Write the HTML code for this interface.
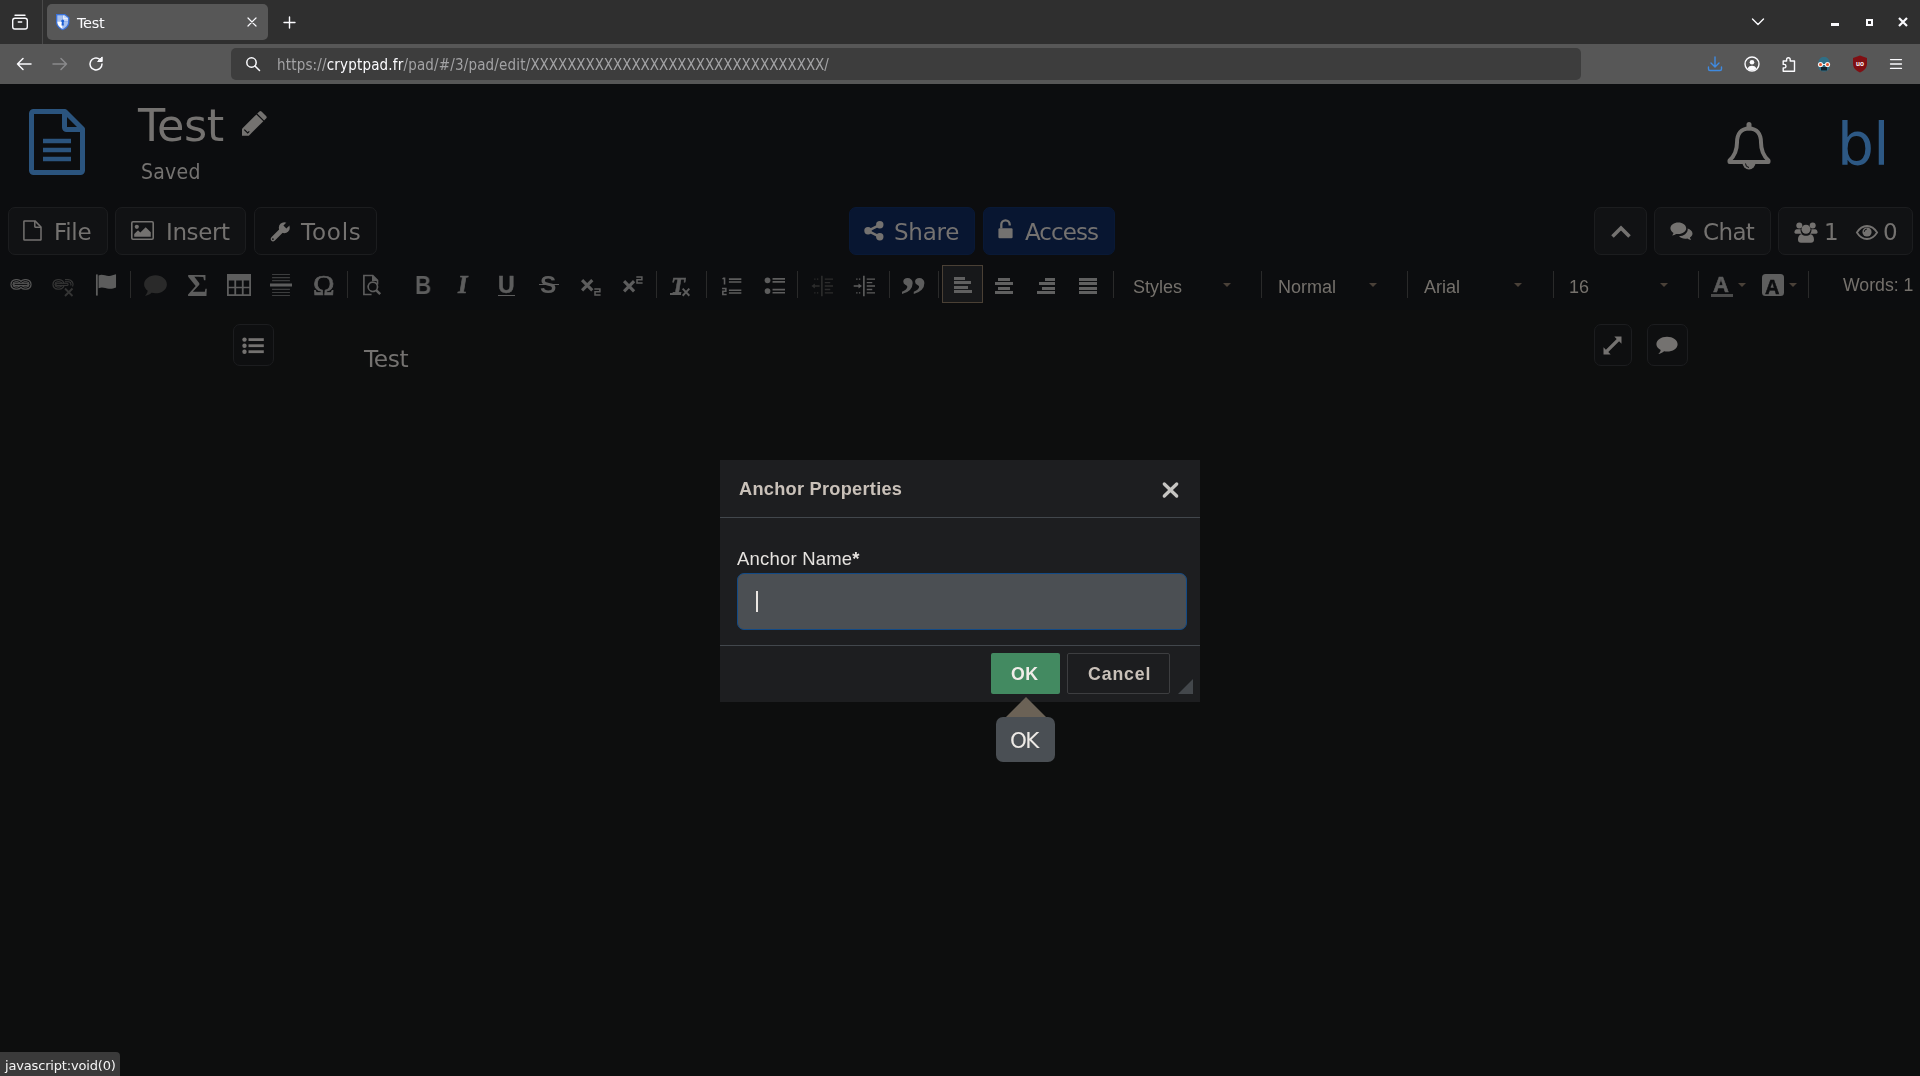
<!DOCTYPE html>
<html lang="en">
<head>
<meta charset="utf-8">
<title>Test</title>
<style>
*{box-sizing:border-box;margin:0;padding:0}
html,body{width:1920px;height:1076px;overflow:hidden;background:#0c0d0f}
body{position:relative;font-family:"DejaVu Sans","Liberation Sans",sans-serif;color:#747270}
.abs{position:absolute}
svg{position:absolute;overflow:visible}
/* browser chrome */
#tabbar{left:0;top:0;width:1920px;height:44px;background:#2f2f2f}
#navbar{left:0;top:44px;width:1920px;height:40px;background:#575757}
#tab{left:47px;top:4px;width:221px;height:36px;border-radius:5px;background:#575757}
#tabsep{left:42px;top:0;width:1px;height:44px;background:#4a4a4a}
#urlbar{left:231px;top:48px;width:1350px;height:32px;border-radius:5px;background:#3d3d3d}
.ff{font-family:"DejaVu Sans Condensed","DejaVu Sans",sans-serif}
.t{position:absolute;white-space:nowrap;line-height:1;will-change:transform}
/* page */
#page{left:0;top:84px;width:1920px;height:992px;background:#0c0d0f}
#edit{left:0;top:310px;width:1920px;height:766px;background:#0d0e0e}
.btn{position:absolute;top:207px;height:48px;border:1px solid #1c1d1f;border-radius:7px;background:#111214}
.btn.b{background:#081631;border-color:#091936}
.sep{position:absolute;top:271px;width:1px;height:27px;background:#2a2a2a}
.ar{font-family:"Liberation Sans",sans-serif}
.combo{will-change:transform;position:absolute;white-space:nowrap;line-height:1;font-family:"Liberation Sans",sans-serif;font-size:18px;color:#75716c;top:277.700px}
.dd{position:absolute;width:0;height:0;border-left:4px solid transparent;border-right:4px solid transparent;border-top:4.5px solid #4a4138;top:283px}
.sbtn{position:absolute;border:1px solid #1c1d1f;border-radius:7px;background:#0e0f10}
/* dialog */
#dlg{left:720px;top:460px;width:480px;height:241.500px;background:#1d1e20}
</style>
</head>
<body>
<!-- ============ BROWSER CHROME ============ -->
<div class="abs" id="tabbar"></div>
<div class="abs" id="navbar"></div>
<div class="abs" id="tabsep"></div>
<div class="abs" id="tab"></div>
<div class="abs" id="urlbar"></div>
<!-- firefox view icon -->
<svg style="left:11px;top:13px" width="18" height="18" viewBox="0 0 18 18" fill="none" stroke="#fbfbfe" stroke-width="1.4"><rect x="1.7" y="5.2" width="14.6" height="10.8" rx="2.2"/><path d="M4 2.3h10" stroke-linecap="round"/><path d="M7.3 9h3.4" stroke-linecap="round"/></svg>
<!-- favicon -->
<svg style="left:56.300px;top:14px" width="13.400" height="16.200" viewBox="0 0 13.400 16.200"><path d="M0 0H9.100L13.400 3.400V8C13.400 12.200 10 15 6.700 16.200 3.400 15 0 12.200 0 8z" fill="#3a72da"/><path d="M1.300 1.300H6.700V7.600H1.300z" fill="#a6c0ef"/><path d="M6.700 1.300H8.600L12.100 4.100V7.600H6.700z" fill="#c4d5f5"/><path d="M1.300 7.600H6.700V14.900C3.900 13.800 1.300 11.300 1.300 8z" fill="#ffffff"/><path d="M6.700 7.600H12.100V8C12.100 11.300 9.500 13.800 6.700 14.900z" fill="#a6c0ef"/><path d="M7.600 1.800V4.600H11.600" fill="none" stroke="#e9effb" stroke-width="1"/><circle cx="6.700" cy="6.900" r="1.500" fill="#1d5fd3"/><path d="M5.900 7.500h1.600l.4 4H5.500z" fill="#1d5fd3"/></svg>
<div class="t" style="left:77px;top:16.400px;font-size:14.500px;letter-spacing:-.3px;color:#fbfbfe">Test</div>
<svg style="left:247px;top:17px" width="10" height="10" viewBox="0 0 10 10" stroke="#fbfbfe" stroke-width="1.200" stroke-linecap="round"><path d="M1 1l8 8M9 1l-8 8"/></svg>
<svg style="left:283px;top:16px" width="13" height="13" viewBox="0 0 13 13" stroke="#fbfbfe" stroke-width="1.400" stroke-linecap="round"><path d="M6.500 1v11M1 6.500h11"/></svg>
<!-- right of tab bar -->
<svg style="left:1751px;top:17px" width="14" height="10" viewBox="0 0 14 10" fill="none" stroke="#fbfbfe" stroke-width="1.400" stroke-linecap="round" stroke-linejoin="round"><path d="M1.500 2l5.500 5.500L12.500 2"/></svg>
<div class="abs" style="left:1831px;top:23px;width:8px;height:3px;background:#fbfbfe"></div>
<div class="abs" style="left:1865.500px;top:18.500px;width:7px;height:7px;border:2.300px solid #fbfbfe"></div>
<svg style="left:1898px;top:17px" width="10" height="10" viewBox="0 0 10 10" stroke="#fbfbfe" stroke-width="2.200"><path d="M1 1l8 8M9 1l-8 8"/></svg>
<!-- nav buttons -->
<svg style="left:16px;top:57px" width="16" height="14" viewBox="0 0 16 14" fill="none" stroke="#fbfbfe" stroke-width="1.500" stroke-linecap="round" stroke-linejoin="round"><path d="M15 7H1.500M7 1.500 1.500 7 7 12.500"/></svg>
<svg style="left:52px;top:57px" width="16" height="14" viewBox="0 0 16 14" fill="none" stroke="#8a8a8c" stroke-width="1.500" stroke-linecap="round" stroke-linejoin="round"><path d="M1 7h13.500M9 1.500 14.500 7 9 12.500"/></svg>
<svg style="left:88px;top:56px" width="16" height="16" viewBox="0 0 16 16" fill="none" stroke="#fbfbfe" stroke-width="1.500" stroke-linecap="round"><path d="M14 8a6 6 0 1 1-2.200-4.650"/><path d="M14.200 1.300v4.200h-4.200z" fill="#fbfbfe" stroke-linejoin="round" stroke-width="1"/></svg>
<!-- url bar -->
<svg style="left:245px;top:56px" width="16" height="16" viewBox="0 0 16 16" fill="none" stroke="#fbfbfe" stroke-width="1.500" stroke-linecap="round"><circle cx="6.500" cy="6.500" r="4.700"/><path d="M10 10l4.500 4.500"/></svg>
<div class="t ff" id="url" style="left:276.500px;top:58px;font-size:15px;letter-spacing:.17px;color:#a3a3a5"><span id="ua">https://</span><span id="ub" style="color:#fbfbfe">cryptpad.fr</span><span id="uc">/pad/#/3/pad/edit/</span><span id="ud" style="letter-spacing:-.06px">XXXXXXXXXXXXXXXXXXXXXXXXXXXXXXXX/</span></div>
<!-- right nav icons -->
<svg style="left:1707px;top:56px" width="16" height="16" viewBox="0 0 16 16" fill="none" stroke="#3f8ae0" stroke-width="1.400" stroke-linecap="round" stroke-linejoin="round"><path d="M8 1v9.500M4 7l4 4 4-4M1.500 11v2a1.500 1.500 0 0 0 1.500 1.500h10a1.500 1.500 0 0 0 1.500-1.500v-2"/></svg>
<svg style="left:1744px;top:56px" width="16" height="16" viewBox="0 0 16 16" fill="none" stroke="#fbfbfe" stroke-width="1.400"><circle cx="8" cy="8" r="7"/><circle cx="8" cy="6.300" r="2.300" fill="#fbfbfe" stroke="none"/><path d="M3.500 12.400c1-2 2.600-2.700 4.500-2.700s3.500.700 4.500 2.700c-1.200 1.200-2.700 1.900-4.500 1.900s-3.300-.700-4.500-1.900z" fill="#fbfbfe" stroke="none"/></svg>
<svg style="left:1781px;top:56px" width="16" height="16" viewBox="0 0 16 16" fill="none" stroke="#fbfbfe" stroke-width="1.400" stroke-linejoin="round"><path d="M2.200 5h3.400v-1.400a1.800 1.800 0 0 1 3.600 0v1.400h4.300v10.300h-11.300v-3.400h1a1.750 1.750 0 0 0 0-3.500h-1z"/></svg>
<!-- badger-ish extension -->
<svg style="left:1815px;top:56px" width="18" height="16" viewBox="0 0 18 16"><path d="M3.500 6.500C3.500 3 6 1 9 1s5.500 2 5.500 5.500V11c0 2.500-2.500 4.500-5.500 4.500S3.500 13.500 3.500 11z" fill="#2f6f86"/><path d="M6 11h6v3.500H6z" fill="#14222b"/><circle cx="5.500" cy="8.500" r="2.600" fill="#f2f2f2"/><circle cx="12.500" cy="8.500" r="2.600" fill="#f2f2f2"/><circle cx="5.500" cy="8.500" r="1.500" fill="#e4572e"/><circle cx="12.500" cy="8.500" r="1.500" fill="#e4572e"/><rect x="7.500" y="8" width="3" height="1" fill="#f2f2f2"/></svg>
<!-- ublock -->
<svg style="left:1852px;top:55px" width="16" height="18" viewBox="0 0 16 18"><path d="M8 .500 15 3v5.500c0 4.500-3 7.300-7 9-4-1.700-7-4.500-7-9V3z" fill="#800f13"/><text x="8" y="11" font-family="Liberation Sans,sans-serif" font-weight="bold" font-size="6.500" fill="#fff" text-anchor="middle">uo</text></svg>
<svg style="left:1888px;top:57px" width="16" height="14" viewBox="0 0 16 14" stroke="#fbfbfe" stroke-width="1.300" stroke-linecap="round"><path d="M2.500 2.600h11M2.500 7h11M2.500 11.400h11"/></svg>

<!-- ============ PAGE ============ -->
<div class="abs" id="page"></div>
<div class="abs" id="edit"></div>
<!-- big file icon 29..85 x 109..175 -->
<svg style="left:29px;top:109px" width="56" height="66" viewBox="0 0 56 66" fill="none" stroke="#2b547e" stroke-width="5" stroke-linejoin="round"><path d="M2.500 4.500a2 2 0 0 1 2-2H36L53.500 20v41.500a2 2 0 0 1-2 2h-47a2 2 0 0 1-2-2z"/><path d="M35.500 2.500v16a2 2 0 0 0 2 2h16"/><path d="M14 32h28M14 41h28M14 50h28" stroke-width="4.500" stroke-linejoin="miter"/></svg>
<div class="t" style="left:138px;top:103.500px;font-size:44.500px;letter-spacing:-.5px">Test</div>
<!-- pencil 242..268 x 110..136 -->
<svg style="left:242px;top:109.700px" width="26" height="26" viewBox="0 0 26 26" fill="#747270"><path d="M0 25.800V18.800L14.400 4.400 21.300 11.300 6.800 25.800z"/><path d="M15.200 3.600 17.400 1.400Q18.450.350 19.500 1.400L24.300 6.200Q25.350 7.250 24.300 8.300L22.100 10.500z"/><path d="M2.300 19.600 5.700 23 7.300 21.400" fill="none" stroke="#0c0d0f" stroke-width="1.200"/></svg>
<div class="t ff" style="left:140.500px;top:161.500px;font-size:21px;letter-spacing:.25px">Saved</div>
<!-- bell -->
<svg style="left:1727px;top:122px" width="44" height="48" viewBox="0 0 44 48" fill="none" stroke="#747270" stroke-width="4" stroke-linejoin="round"><path d="M22 6.500c-8 0-12 5.500-12 14 0 8-2.500 13.500-7.500 18v1.500h39v-1.500c-5-4.500-7.500-10-7.500-18 0-8.500-4-14-12-14z"/><path d="M22 6V2.500" stroke-linecap="round" stroke-width="5"/><path d="M15.500 41a6.500 6.500 0 0 0 13 0z" fill="#747270" stroke="none"/><path d="M18.500 41.500a4 4 0 0 0 3.500 4" stroke="#0c0d0f" stroke-width="1"/></svg>
<div class="t" style="left:1837px;top:116px;font-size:58.300px;letter-spacing:-.8px;color:#2d5884">bl</div>
<!-- buttons -->
<div class="btn" style="left:8px;width:100px"></div>
<div class="btn" style="left:115px;width:131px"></div>
<div class="btn" style="left:254px;width:123px;background:#0e0f11"></div>
<div class="btn b" style="left:849px;width:126px"></div>
<div class="btn b" style="left:983px;width:132px"></div>
<div class="btn" style="left:1594px;width:53px"></div>
<div class="btn" style="left:1654px;width:117px"></div>
<div class="btn" style="left:1778px;width:135px"></div>
<!-- file-o -->
<svg style="left:23px;top:220px" width="19" height="21" viewBox="0 0 19 21" fill="none" stroke="#747270" stroke-width="1.500" stroke-linejoin="round"><path d="M.900 1.500a.6.600 0 0 1 .6-.6H12L18 7v12.500a.6.600 0 0 1-.6.600H1.500a.6.600 0 0 1-.6-.6z"/><path d="M11.800 1v5.600a.6.600 0 0 0 .6.600H18"/></svg>
<div class="t" style="left:53.500px;top:220.500px;font-size:23px;letter-spacing:-.3px">File</div>
<!-- picture-o -->
<svg style="left:131px;top:221px" width="23" height="19" viewBox="0 0 23 19"><rect x=".8" y=".8" width="21.400" height="17.400" rx="1.200" fill="none" stroke="#747270" stroke-width="1.600"/><circle cx="5.800" cy="5.800" r="2.100" fill="#747270"/><path d="M3.200 15.700v-2.600l3.800-3.800 2.300 2.300 5.400-5.400 5.100 5.100v4.400z" fill="#747270"/></svg>
<div class="t" style="left:165.900px;top:220.500px;font-size:23px;letter-spacing:-.4px">Insert</div>
<!-- wrench -->
<svg style="left:269.800px;top:221.500px" width="20" height="20" viewBox="0 0 20 20"><path d="M3 17 12 8" stroke="#747270" stroke-width="4.600" stroke-linecap="round"/><circle cx="14.300" cy="5.700" r="5.500" fill="#747270"/><path d="M14.900 5.100 21 -1" stroke="#0e0f11" stroke-width="4.200"/><circle cx="2.900" cy="17.100" r=".9" fill="#0e0f11"/></svg>
<div class="t" style="left:301px;top:220.500px;font-size:23px;letter-spacing:0.8px">Tools</div>
<!-- share-alt -->
<svg style="left:864px;top:221px" width="20" height="20" viewBox="0 0 20 20" fill="#747270" stroke="#747270"><circle cx="15.800" cy="3.800" r="3.700" stroke="none"/><circle cx="15.800" cy="15.800" r="3.700" stroke="none"/><circle cx="4" cy="9.800" r="3.700" stroke="none"/><path d="M4 9.800 15.800 3.800M4 9.800l11.800 6" stroke-width="2.500" fill="none"/></svg>
<div class="t" style="left:894px;top:220.500px;font-size:23px;letter-spacing:-0.27px">Share</div>
<!-- unlock-alt -->
<svg style="left:998px;top:219px" width="15" height="20" viewBox="0 0 15 20" fill="#747270"><rect x=".4" y="9.200" width="14.200" height="10" rx="1.200"/><path d="M3.300 9.500V5.600a4.200 4.200 0 0 1 8.400 0v1" fill="none" stroke="#747270" stroke-width="2.300"/></svg>
<div class="t" style="left:1025px;top:220.500px;font-size:23px;letter-spacing:-0.96px">Access</div>
<!-- chevron up -->
<svg style="left:1611px;top:225px" width="20" height="13" viewBox="0 0 20 13" fill="none" stroke="#747270" stroke-width="3.600"><path d="M1.500 11.500 10 3l8.500 8.500"/></svg>
<!-- comments -->
<svg style="left:1670px;top:222px" width="23" height="19" viewBox="0 0 23 19" fill="#747270"><path d="M8.300.500c4.400 0 7.900 2.600 7.900 5.800s-3.500 5.800-7.900 5.800c-.7 0-1.400-.100-2.100-.200-1.200.9-2.600 1.400-4.100 1.500 .7-.7 1.200-1.500 1.400-2.500C1.600 9.800.400 8.200.400 6.300.400 3.100 3.900.500 8.300.500z"/><path d="M17.600 6.500c2.700.8 4.900 2.700 4.900 5 0 1.700-1 3.100-2.600 4.100.2.900.7 1.700 1.300 2.300-1.400-.1-2.800-.6-3.900-1.400-.7.100-1.300.2-2 .2-2.600 0-4.900-.9-6.300-2.400 4.900-.100 8.700-3.200 8.700-7 0-.3 0-.5-.1-.8z"/></svg>
<div class="t" style="left:1703.300px;top:220.500px;font-size:23px;letter-spacing:-0.63px">Chat</div>
<!-- users -->
<svg style="left:1794px;top:222px" width="24" height="21" viewBox="0 0 24 21" fill="#747270"><circle cx="5.300" cy="3.600" r="3"/><circle cx="18.700" cy="3.600" r="3"/><circle cx="12" cy="7.300" r="4.500"/><path d="M.400 10.500c0-2 1-3.300 2.500-3.300h3.700c-.3 1.900.300 3.400 1.500 4.600H3c-1.500 0-2.600-.5-2.600-1.300zM23.600 10.500c0-2-1-3.300-2.500-3.300h-3.700c.3 1.900-.3 3.400-1.500 4.600H21c1.500 0 2.600-.5 2.600-1.300z"/><path d="M4 17.800c0-3.300 1.500-5.600 3.800-5.600 1.100 1 2.600 1.600 4.200 1.600s3.100-.6 4.200-1.600c2.300 0 3.800 2.300 3.800 5.600 0 1.800-1.200 2.900-3 2.900H7c-1.800 0-3-1.100-3-2.900z"/></svg>
<div class="t" style="left:1824px;top:220.500px;font-size:23px;letter-spacing:0px">1</div>
<!-- eye -->
<svg style="left:1856px;top:225px" width="22" height="15" viewBox="0 0 22 15" fill="none" stroke="#747270"><path d="M.900 7.500C3.500 3.300 7 1 11 1s7.500 2.300 10.100 6.500C18.500 11.700 15 14 11 14S3.500 11.700.900 7.500z" stroke-width="1.800"/><circle cx="11" cy="7" r="4.600" fill="#747270" stroke="none"/><path d="M8.300 6.800a2.700 2.700 0 0 1 2.600-2.700" stroke="#111214" stroke-width="1"/></svg>
<div class="t" style="left:1883px;top:220.500px;font-size:23px;letter-spacing:0px">0</div>

<!--TB0-->
<svg style="left:9px;top:277px" width="24" height="22" viewBox="0 0 24 22" fill="none"><g stroke="#555555" stroke-width="3.300"><rect x="3" y="3.700" width="9" height="7.400" rx="3.700"/><rect x="12" y="3.700" width="9" height="7.400" rx="3.700"/></g><g stroke="#0c0d0f" stroke-width="1"><rect x="3" y="3.700" width="9" height="7.400" rx="3.700"/><rect x="12" y="3.700" width="9" height="7.400" rx="3.700"/></g><g stroke="#555555" stroke-width="3.200" stroke-linecap="round"><path d="M6 7.400h12"/></g><g stroke="#0c0d0f" stroke-width="1" stroke-linecap="round"><path d="M6 7.400h12"/></g></svg>
<svg style="left:51px;top:276.5px" width="24" height="22" viewBox="0 0 24 22" fill="none"><g stroke="#343434" stroke-width="3.300"><rect x="3" y="3.700" width="9" height="7.400" rx="3.700"/><path d="M14 3.700h3.300a3.700 3.700 0 0 1 3.300 5.400"/></g><g stroke="#0c0d0f" stroke-width="1"><rect x="3" y="3.700" width="9" height="7.400" rx="3.700"/><path d="M14 3.700h3.300a3.700 3.700 0 0 1 3.300 5.400"/></g><g stroke="#343434" stroke-width="3.200" stroke-linecap="round"><path d="M6 7.400h10"/></g><g stroke="#0c0d0f" stroke-width="1" stroke-linecap="round"><path d="M6 7.400h10"/></g><path d="M14 11.500l7.500 7.500M21.500 11.500l-7.500 7.500" stroke-width="1.900" stroke="#343434"/></svg>
<svg style="left:95px;top:274px" width="22" height="22" viewBox="0 0 16 16" fill="#5d5d5d" stroke="none" ><path d="M.700 .300h1.300v15.400H.700z"/><path d="M2.600 1c2.800-1.300 5 .6 7.800.4 1.600-.1 3-.7 4.900-1.200v9.600c-2 .9-3.600 1.100-5.200.9C7.500 10.400 5.200 9 2.600 10.400z"/></svg>
<div class="sep" style="left:130px"></div>
<svg style="left:142.5px;top:273px" width="25" height="25" viewBox="0 0 16 16" fill="#2a2a2a" stroke="none" ><path d="M8 1.500c4 0 7.300 2.600 7.300 5.800S12 13 8 13c-.9 0-1.700-.1-2.500-.3-1.200 1.100-2.700 1.800-4.300 1.900 1-.9 1.600-2.100 1.800-3.300C1.600 10.200.700 8.800.700 7.300.700 4.100 4 1.500 8 1.500z"/></svg>
<div class="t" style="left:186.500px;top:269.500px;font-family:'Liberation Serif',serif;font-weight:bold;font-size:31px;color:#5d5d5d;transform:scaleX(1.05);transform-origin:0 0">Σ</div>
<svg style="left:227px;top:274px" width="24" height="22" viewBox="0 0 16 16" preserveAspectRatio="none" fill="#5d5d5d"><path d="M0 0h16v16H0zM1.200 4.800v4.400h3.700V4.800zm4.900 0v4.400h3.800V4.800zm5 0v4.400h3.700V4.800zM1.200 10.400v4.400h3.700v-4.400zm4.900 0v4.400h3.800v-4.400zm5 0v4.400h3.700v-4.400z" fill-rule="evenodd"/></svg>
<svg style="left:270px;top:274px" width="22" height="22" viewBox="0 0 16 16" fill="#5d5d5d" stroke="none" ><path d="M1.500 0h13v.8h-13zM1.500 2.200h13v.8h-13zM1.500 4.400h13v.8h-13zM1.500 10.800h13v.8h-13zM1.500 13h13v.8h-13zM1.500 15.200h13v.8h-13z" opacity=".6"/><path d="M0 6.900h16v2.200H0z"/></svg>
<div class="t" style="left:312.500px;top:270.500px;font-family:'Liberation Serif',serif;font-weight:normal;-webkit-text-stroke:.7px #5d5d5d;font-size:29px;color:#5d5d5d">Ω</div>
<div class="sep" style="left:347px"></div>
<svg style="left:361px;top:274px" width="22" height="22" viewBox="0 0 16 16" fill="#5d5d5d" stroke="none" ><path d="M1.500.500h7.300L12.600 4.300v3.300h-1.200V5H8V1.700H2.700v12.600h5v1.200H1.500z"/><path d="M8.600 5.300a4 4 0 0 1 3.400 6.100l2.600 2.600-1.300 1.300-2.600-2.600A4 4 0 1 1 8.600 5.300zm0 1.200a2.800 2.800 0 1 0 0 5.600 2.800 2.800 0 0 0 0-5.600z" fill-rule="evenodd"/></svg>
<div class="t" style="left:415px;top:272.5px;font-family:'Liberation Sans',sans-serif;font-weight:bold;font-size:25px;color:#5d5d5d;transform:scaleX(.9);transform-origin:0 0">B</div>
<div class="t" style="left:457.5px;top:272.5px;font-family:'Liberation Serif',sans-serif;font-weight:bold;font-size:24.5px;color:#5d5d5d;font-style:italic;-webkit-text-stroke:.7px #5d5d5d">I</div>
<div class="t" style="left:498px;top:274px;font-family:'Liberation Sans',sans-serif;font-weight:bold;font-size:23px;color:#5d5d5d;-webkit-text-stroke:.5px #5d5d5d">U</div>
<div class="abs" style="left:498px;top:294.500px;width:17px;height:1.500px;background:#5d5d5d"></div>
<div class="t" style="left:540px;top:272.5px;font-family:'Liberation Sans',sans-serif;font-weight:bold;font-size:24.5px;color:#5d5d5d;">S</div>
<div class="abs" style="left:538.500px;top:283.500px;width:20px;height:1.800px;background:#5d5d5d"></div>
<svg style="left:580.6px;top:278.8px" width="12.4" height="12.4" viewBox="0 0 12.4 12.4" fill="none" stroke="#5d5d5d" stroke-width="3.1"><path d="M1.08 1.08L11.32 11.32M11.32 1.08L1.08 11.32"/></svg>
<svg style="left:594px;top:288px" width="7" height="8" viewBox="0 0 7 8" fill="none" stroke="#5d5d5d" stroke-width="1.500"><path d="M.300 .900H5.900V3.800H1V7H6.600"/></svg>
<svg style="left:622.9px;top:280.2px" width="12.2" height="12.4" viewBox="0 0 12.2 12.4" fill="none" stroke="#5d5d5d" stroke-width="3.1"><path d="M1.08 1.08L11.11 11.32M11.11 1.08L1.08 11.32"/></svg>
<svg style="left:636.4px;top:276px" width="7" height="8" viewBox="0 0 7 8" fill="none" stroke="#5d5d5d" stroke-width="1.500"><path d="M.300 .900H5.900V3.800H1V7H6.600"/></svg>
<div class="sep" style="left:656px"></div>
<div class="t" style="left:670.5px;top:273.5px;font-family:'Liberation Serif',sans-serif;font-weight:bold;font-size:23px;color:#5d5d5d;font-style:italic;-webkit-text-stroke:.5px #5d5d5d">T</div>
<div class="abs" style="left:670.300px;top:293px;width:10.600px;height:1.500px;background:#5d5d5d"></div>
<svg style="left:682.3px;top:288.2px" width="8" height="8.4" viewBox="0 0 8 8.4" fill="none" stroke="#5d5d5d" stroke-width="1.9"><path d="M0.66 0.66L7.33 7.74M7.33 0.66L0.66 7.74"/></svg>
<div class="sep" style="left:706px"></div>
<svg style="left:721px;top:275.5px" width="21" height="21" viewBox="0 0 16 16" fill="#5d5d5d" stroke="none" ><path d="M1.800 1.200h1.500v5.300H2.100V2.400H1V1.700zM6 1.800h9.500v1.200H6zM6 4h9.500v1.200H6zM6 10.200h9.500v1.200H6zM6 12.400h9.500v1.200H6z"/><path d="M.800 9h3.500v3.200H2v1.300h2.300v1.100H.800v-3.500h2.300V10.100H.800z"/></svg>
<svg style="left:763.5px;top:275.5px" width="21" height="21" viewBox="0 0 16 16" fill="#5d5d5d" stroke="none" ><circle cx="2.700" cy="3.300" r="2.200"/><circle cx="2.700" cy="11.500" r="2.200"/><path d="M6.500 1.500h9.500v1.300H6.500zM6.500 3.900h9.500v1.300H6.500zM6.500 9.700h9.500V11H6.500zM6.500 12.100h9.500v1.300H6.500z"/></svg>
<div class="sep" style="left:797px"></div>
<svg style="left:811px;top:274.7px" width="22" height="22" viewBox="0 0 16 16" fill="#2c2c2c" stroke="none" ><path d="M7.300.500h1.200v15H7.300z"/><path d="M10 2.500h6v1h-6zM10 5h4v1h-4zM10 7.500h6v1h-6zM10 10h4v1h-4zM10 12.500h6v1h-6z"/><path d="M2.300 2.500h1v1h-1zM4.300 2.500h1v1h-1zM2.300 12.500h1v1h-1zM4.300 12.500h1v1h-1z"/><path d="M6.300 7.500v1H2.800v1.300L.300 8l2.500-1.800v1.300z"/></svg>
<svg style="left:853px;top:274.7px" width="22" height="22" viewBox="0 0 16 16" fill="#5d5d5d" stroke="none" ><path d="M7.300.500h1.200v15H7.300z"/><path d="M10 2.500h6v1h-6zM10 5h4v1h-4zM10 7.500h6v1h-6zM10 10h4v1h-4zM10 12.500h6v1h-6z"/><path d="M2.300 2.500h1v1h-1zM4.300 2.500h1v1h-1zM2.300 12.500h1v1h-1zM4.300 12.500h1v1h-1z"/><path d="M.500 7.500v1h3.500v1.300L6.500 8 4 6.200v1.300z"/></svg>
<div class="sep" style="left:889px"></div>
<div class="t" style="left:900px;top:269.500px;font-family:'Liberation Serif',serif;font-weight:bold;font-size:52px;color:#5d5d5d;letter-spacing:-2.500px;transform:scaleX(1.03);transform-origin:0 0">”</div>
<div class="sep" style="left:938px"></div>
<div class="abs" style="left:942px;top:265px;width:41px;height:38px;border:1px solid #4a4035;background:#17181a"></div>
<div class="abs" style="left:954px;top:276.5px;width:10.5px;height:3px;background:#606060"></div>
<div class="abs" style="left:954px;top:281px;width:16.5px;height:3px;background:#606060"></div>
<div class="abs" style="left:954px;top:285.5px;width:13.5px;height:3px;background:#606060"></div>
<div class="abs" style="left:954px;top:290px;width:18px;height:3px;background:#606060"></div>
<div class="abs" style="left:998px;top:277.5px;width:12px;height:3px;background:#606060"></div>
<div class="abs" style="left:995px;top:282px;width:18px;height:3px;background:#606060"></div>
<div class="abs" style="left:998px;top:286.5px;width:12px;height:3px;background:#606060"></div>
<div class="abs" style="left:995px;top:291px;width:18px;height:3px;background:#606060"></div>
<div class="abs" style="left:1044.5px;top:277.5px;width:10.5px;height:3px;background:#606060"></div>
<div class="abs" style="left:1038.5px;top:282px;width:16.5px;height:3px;background:#606060"></div>
<div class="abs" style="left:1041.5px;top:286.5px;width:13.5px;height:3px;background:#606060"></div>
<div class="abs" style="left:1037px;top:291px;width:18px;height:3px;background:#606060"></div>
<div class="abs" style="left:1079px;top:277.5px;width:18px;height:3px;background:#606060"></div>
<div class="abs" style="left:1079px;top:282px;width:18px;height:3px;background:#606060"></div>
<div class="abs" style="left:1079px;top:286.5px;width:18px;height:3px;background:#606060"></div>
<div class="abs" style="left:1079px;top:291px;width:18px;height:3px;background:#606060"></div>
<div class="sep" style="left:1113px"></div>
<div class="combo" style="left:1132.5px">Styles</div>
<div class="dd" style="left:1223px"></div>
<div class="sep" style="left:1261px"></div>
<div class="combo" style="left:1278.3px">Normal</div>
<div class="dd" style="left:1369px"></div>
<div class="sep" style="left:1407px"></div>
<div class="combo" style="left:1424px">Arial</div>
<div class="dd" style="left:1514px"></div>
<div class="sep" style="left:1553px"></div>
<div class="combo" style="left:1568.7px">16</div>
<div class="dd" style="left:1660px"></div>
<div class="sep" style="left:1698px"></div>
<div class="t" style="left:1712.5px;top:273.5px;font-family:'Liberation Sans',sans-serif;font-weight:bold;font-size:22px;color:#5d5d5d;-webkit-text-stroke:.6px #5d5d5d">A</div>
<div class="abs" style="left:1710.500px;top:294px;width:22.500px;height:3px;background:#4a4a4a"></div>
<div class="dd" style="left:1738px"></div>
<div class="abs" style="left:1762px;top:274px;width:22px;height:22px;border-radius:3.500px;background:#5e5e5e"></div>
<div class="t" style="left:1765.2px;top:276.5px;font-family:'Liberation Sans',sans-serif;font-weight:bold;font-size:20px;color:#0c0d0f;-webkit-text-stroke:.5px #0c0d0f">A</div>
<div class="dd" style="left:1789px"></div>
<div class="sep" style="left:1808px"></div>
<div class="combo" style="left:1842.500px;top:277px;font-size:17.700px">Words: 1</div>
<!--TB1-->
<!--R0-->
<!-- editor area -->
<div class="sbtn" style="left:233px;top:324px;width:41px;height:41.500px"></div>
<svg style="left:242px;top:337px" width="22" height="17" viewBox="0 0 22 17" fill="#747270"><circle cx="2.500" cy="2.600" r="2.200"/><circle cx="2.500" cy="8.700" r="2.200"/><circle cx="2.500" cy="14.700" r="2.200"/><rect x="6.500" y="1.200" width="15.300" height="2.800"/><rect x="6.500" y="7.300" width="15.300" height="2.800"/><rect x="6.500" y="13.300" width="15.300" height="2.800"/></svg>
<div class="t" style="left:363.800px;top:346.500px;font-size:23.300px;letter-spacing:-.4px;font-family:'DejaVu Sans',sans-serif">Test</div>
<div class="sbtn" style="left:1594px;top:324px;width:38px;height:41.500px"></div>
<svg style="left:1603px;top:336px" width="19" height="19" viewBox="0 0 19 19" fill="#747270"><path d="M11.300 .500H18.500V7.700l-2.400-2.400L5.300 16.100l2.400 2.400H.500V11.300l2.400 2.400L13.700 2.900z"/></svg>
<div class="sbtn" style="left:1647px;top:324px;width:41px;height:41.500px"></div>
<svg style="left:1656px;top:336.200px" width="22" height="20" viewBox="0 0 22 20" fill="#747270"><path d="M11 .800c5.900 0 10.600 3.300 10.600 7.400s-4.700 7.400-10.600 7.400c-1 0-2-.1-2.900-.3-1.700 1.500-3.700 2.500-5.900 2.700 1.300-1.100 2.200-2.500 2.500-4.100C2.100 12.500.400 10.500.400 8.200.400 4.100 5.100.800 11 .800z"/></svg>
<!-- dialog -->
<div class="abs" id="dlg"></div>
<div class="abs" style="left:720px;top:517px;width:480px;height:1px;background:#42474c"></div>
<div class="abs" style="left:720px;top:645px;width:480px;height:1px;background:#42474c"></div>
<div class="t ar" style="left:738.500px;top:480.200px;font-size:18.200px;font-weight:bold;color:#c9c1b9;letter-spacing:.27px">Anchor Properties</div>
<svg style="left:1161.500px;top:481.700px" width="17" height="16" viewBox="0 0 17 16" stroke="#c6c5c2" stroke-width="3.300" stroke-linecap="round" fill="none"><path d="M2.300 2l12.400 12M14.700 2l-12.400 12"/></svg>
<div class="t ar" style="left:736.500px;top:550.200px;font-size:18.500px;color:#e6e3df;letter-spacing:.2px">Anchor Name<b>*</b></div>
<div class="abs" style="left:737px;top:573px;width:450px;height:57px;border:1.200px solid #124a86;border-radius:7px;background:#4b4f53"></div>
<div class="abs" style="left:756px;top:591px;width:2px;height:21px;background:#ebe7e3"></div>
<div class="abs" style="left:991px;top:653px;width:69px;height:41px;border-radius:2px;background:#438a61"></div>
<div class="t ar" style="left:1011.300px;top:666px;font-size:17.700px;font-weight:bold;color:#f1ede9;letter-spacing:.6px">OK</div>
<div class="abs" style="left:1067px;top:653px;width:103px;height:41px;border-radius:2px;border:1px solid #3d3e40;background:#1c1d1f"></div>
<div class="t ar" style="left:1087.500px;top:666px;font-size:17.700px;font-weight:bold;color:#c9c1b9;letter-spacing:.9px">Cancel</div>
<svg style="left:1178px;top:679px" width="15" height="15" viewBox="0 0 15 15"><path d="M15 0v15H0z" fill="#43474b"/></svg>
<!-- tooltip -->
<svg style="left:1006px;top:697px" width="40" height="20" viewBox="0 0 40 20"><path d="M0 20 20 0l20 20z" fill="#6b6256"/></svg>
<div class="abs" style="left:996px;top:717px;width:59px;height:45px;border-radius:7px;background:#4a4f54"></div>
<div class="t" style="left:1010.300px;top:730px;font-size:21.500px;letter-spacing:-1.700px;color:#edeae6">OK</div>
<!-- status -->
<div class="abs" style="left:0;top:1052px;width:120px;height:24px;background:#3a3a3a;border-top-right-radius:4px"></div>
<div class="t" style="left:4.500px;top:1059px;font-size:13px;color:#f4f4f4;font-family:'DejaVu Sans',sans-serif;letter-spacing:-.17px">javascript:void(0)</div>
<!--R1-->
<!--DIALOG-->
<!--STATUS-->
</body>
</html>
